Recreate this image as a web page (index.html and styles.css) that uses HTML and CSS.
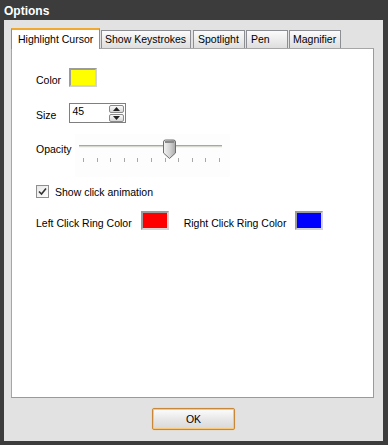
FILE: index.html
```html
<!DOCTYPE html>
<html lang="en">
<head>
  <meta charset="UTF-8" />
  <title>Options</title>
  <link rel="stylesheet" href="styles.css">
</head>
<body>
  <div class="window">
    <div class="titlebar">Options</div>
    <div class="client">
      <div class="tabs">
        <div class="tab active t-cursor">Highlight Cursor</div>
        <div class="tab t-keys">Show Keystrokes</div>
        <div class="tab t-spot">Spotlight</div>
        <div class="tab t-pen">Pen</div>
        <div class="tab t-mag">Magnifier</div>
      </div>
      <div class="panel">
        <div class="row row-color">
          <span class="lbl">Color</span>
          <span class="swatch yellow"></span>
        </div>
        <div class="row row-size">
          <span class="lbl">Size</span>
          <div class="spinner">
            <span class="value">45</span>
            <div class="spin">
              <span class="spin-btn"><svg width="7" height="4" viewBox="0 0 7 4"><path d="M0 4 L3.5 0 L7 4 Z" fill="#222"/></svg></span>
              <span class="spin-btn"><svg width="7" height="4" viewBox="0 0 7 4"><path d="M0 0 L3.5 4 L7 0 Z" fill="#222"/></svg></span>
            </div>
          </div>
        </div>
        <div class="row row-opacity">
          <span class="lbl">Opacity</span>
          <div class="slider">
            <svg width="155" height="43" viewBox="0 0 155 43">
              <rect x="4" y="11" width="143" height="1" fill="#a8a8a0"/>
              <rect x="4" y="12" width="143" height="1" fill="#d8d8d0"/>
              <rect x="4" y="13" width="143" height="1" fill="#f4f4f0"/>
              <g fill="#a8a8a8">
                <rect x="8" y="24" width="1" height="4"/>
                <rect x="22" y="24" width="1" height="4"/>
                <rect x="35" y="24" width="1" height="4"/>
                <rect x="49" y="24" width="1" height="4"/>
                <rect x="62" y="24" width="1" height="4"/>
                <rect x="76" y="24" width="1" height="4"/>
                <rect x="90" y="24" width="1" height="4"/>
                <rect x="103" y="24" width="1" height="4"/>
                <rect x="117" y="24" width="1" height="4"/>
                <rect x="130" y="24" width="1" height="4"/>
                <rect x="144" y="24" width="1" height="4"/>
              </g>
              <defs>
                <linearGradient id="thumb" x1="0" y1="0" x2="1" y2="0">
                  <stop offset="0" stop-color="#f4f4f4"/>
                  <stop offset="0.5" stop-color="#d6d6d6"/>
                  <stop offset="1" stop-color="#a8a8a8"/>
                </linearGradient>
              </defs>
              <path d="M88.5 8 Q88.5 6 90.5 6 H98.5 Q100.5 6 100.5 8 V19 L94.5 24.5 L88.5 19 Z" fill="url(#thumb)" stroke="#6e6e6e" stroke-width="1"/>
              <rect x="90" y="7" width="9" height="2" fill="#8a8a8a"/>
            </svg>
          </div>
        </div>
        <label class="row row-check">
          <span class="checkbox"><svg width="9" height="9" viewBox="0 0 9 9"><path d="M1 4.5 L3.5 7 L8 1.5" fill="none" stroke="#333" stroke-width="1.6"/></svg></span>
          <span class="check-lbl">Show click animation</span>
        </label>
        <div class="row row-rings">
          <span class="lbl">Left Click Ring Color</span>
          <span class="swatch red"></span>
          <span class="lbl lbl-right">Right Click Ring Color</span>
          <span class="swatch blue"></span>
        </div>
      </div>
      <div class="footer">
        <button class="ok">OK</button>
      </div>
    </div>
  </div>
</body>
</html>
```

FILE: styles.css
```css
html, body { margin: 0; padding: 0; }
body { background: #3a3a3a; font-family: "Liberation Sans", Arial, sans-serif; font-size: 10.5px; color: #000; }
.window { width: 388px; height: 445px; box-sizing: border-box; padding: 0 5px 4px 4px; background: #3c3c3c; display: flex; flex-direction: column; }
.titlebar { height: 20px; line-height: 22px; color: #fff; font-weight: bold; font-size: 12px; padding-left: 0; }
.client { flex: 1; background: #e2e2e2; padding: 8px 9px 0 7px; display: flex; flex-direction: column; }

.tabs { display: flex; align-items: flex-end; height: 20px; position: relative; z-index: 1; }
.tab { box-sizing: border-box; height: 18px; line-height: 16px; padding-left: 6px; border: 1px solid #8c8e94; border-bottom: none; background: linear-gradient(#fbfbfb, #dedede); white-space: nowrap; overflow: hidden; margin-right: 1px; }
.tab.active { height: 21px; margin-bottom: -1px; background: #fff; border-top: 2px solid #f0a830; line-height: 18px; padding-left: 6px; }
.t-cursor { width: 89px; }
.t-keys { width: 90px; padding-left: 3px; }
.t-spot { width: 52px; margin-left: 1px; padding-left: 4px; }
.t-pen { width: 42px; padding-left: 4px; }
.t-mag { width: 52px; padding-left: 3px; }

.panel { height: 350px; box-sizing: border-box; background: #fff; border: 1px solid #a6a6a6; border-right-color: #9a9a9a; border-bottom-color: #9a9a9a; padding: 19px 0 0 24px; }

.row { display: flex; align-items: flex-end; }
.lbl { line-height: 12px; }
.swatch { box-sizing: border-box; width: 28px; height: 19px; border: 2px solid; border-color: #9c9c9c #d4d4d4 #d4d4d4 #9c9c9c; }
.yellow { background: #ffff00; }
.red { background: #ff0000; }
.blue { background: #0000ff; }

.row-color .swatch { margin-left: 8px; }
.row-color .lbl { margin-bottom: 1px; }

.row-size { margin-top: 16px; }
.row-size .lbl { margin-bottom: 2px; }
.spinner { box-sizing: border-box; width: 57px; height: 20px; margin-left: 13px; border: 1px solid #7f7f7f; display: flex; justify-content: space-between; }
.spinner .value { padding: 1px 0 0 2px; line-height: 13px; }
.spin { display: flex; flex-direction: column; gap: 1px; padding: 1px 1px 0 0; }
.spin-btn { box-sizing: border-box; width: 15px; height: 8px; border: 1px solid #8a8a8a; border-radius: 2px; background: linear-gradient(#fafafa, #d8d8d8); display: flex; align-items: center; justify-content: center; }
.spin-btn svg { display: block; }

.row-opacity { margin-top: 11px; align-items: flex-start; }
.row-opacity .lbl { margin-top: 9px; }
.slider { margin-left: 3px; width: 155px; height: 43px; background: #fdfdfd; }
.slider svg { display: block; }

.row-check { margin-top: 8px; align-items: center; }
.checkbox { box-sizing: border-box; width: 13px; height: 13px; border: 1px solid #8f8f8f; background: linear-gradient(135deg, #e8e8e8, #fdfdfd); display: flex; align-items: center; justify-content: center; }
.checkbox svg { display: block; }
.check-lbl { margin-left: 6px; }

.row-rings { margin-top: 13px; }
.row-rings .lbl { margin-bottom: 1px; }
.row-rings .red { margin-left: 9px; }
.lbl-right { margin-left: 15px; }
.row-rings .blue { margin-left: 9px; }

.footer { display: flex; justify-content: center; padding-top: 10px; padding-right: 4px; }
.ok { box-sizing: border-box; width: 83px; height: 22px; border: 1px solid #c88838; border-radius: 2px; box-shadow: inset 0 0 0 1px #f8c878, 0 0 1px #f0b060; background: linear-gradient(#fdfdfd, #e8e8e8 50%, #d8d8d8); font-family: "Liberation Sans", Arial, sans-serif; font-size: 10.5px; padding: 0; margin-left: 6px; }
```
